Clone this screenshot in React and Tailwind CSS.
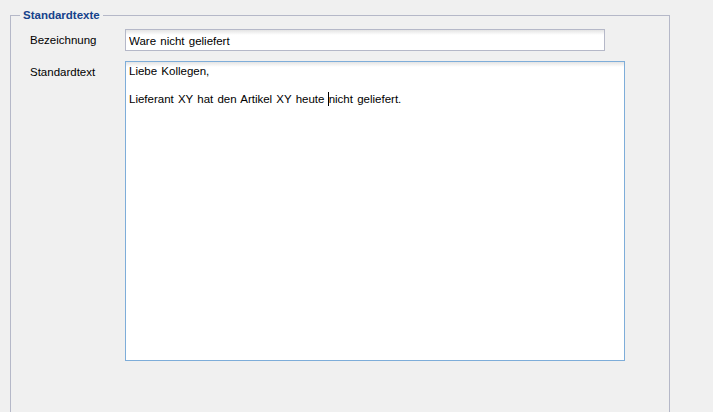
import React from "react";

const fieldBg =
  "bg-[linear-gradient(to_bottom,#e4e4e4_0px,#ffffff_5px,#ffffff_100%)]";

const App = () => {
  return (
    <div className="w-[713px] h-[412px] overflow-hidden bg-[#f0f0f0] font-['Liberation_Sans',Arial,sans-serif] text-[11.5px] leading-[14px] [word-spacing:1px] text-black">
      <fieldset className="ml-[10px] mt-[8px] w-[660px] h-[420px] border border-[#b5b8c8] pl-[9px] pr-0">
        <legend className="px-[3px] font-bold text-[#15428b] text-[11.5px] leading-[14px]">
          Standardtexte
        </legend>
        <div className="flex flex-col gap-[10px] pt-[7px] pl-[10px]">
          <div className="flex">
            <label className="w-[95px] pt-[4px]">Bezeichnung</label>
            <input
              readOnly
              defaultValue="Ware nicht geliefert"
              className={`w-[480px] h-[22px] border border-[#b5b8c8] px-[3px] pt-[2px] leading-[18px] outline-none [word-spacing:1px] ${fieldBg}`}
            />
          </div>
          <div className="flex">
            <label className="w-[95px] pt-[4px]">Standardtext</label>
            <div
              className={`w-[500px] h-[300px] border border-[#7eadd9] px-[3px] pt-[2px] ${fieldBg}`}
            >
              <div>Liebe Kollegen,</div>
              <div>&nbsp;</div>
              <div>
                Lieferant XY hat den Artikel XY heute{" "}
                <span className="inline-block w-[1px] h-[14px] bg-black align-[-3px] -ml-[1px]" />
                nicht geliefert.
              </div>
            </div>
          </div>
        </div>
      </fieldset>
    </div>
  );
};

export default App;
